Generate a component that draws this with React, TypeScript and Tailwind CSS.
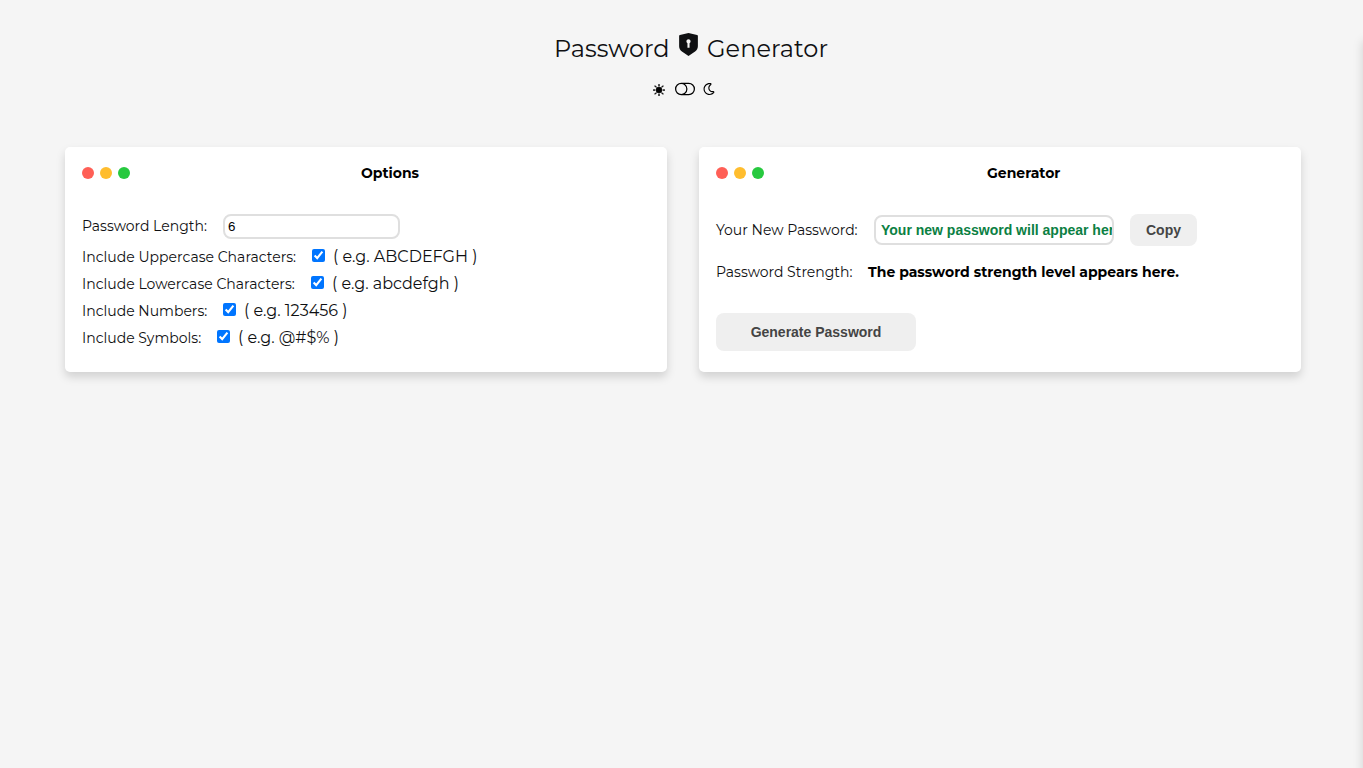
import { BsToggleOff, BsSunFill } from "react-icons/bs";
import { FaRegMoon } from "react-icons/fa";
import { RiShieldKeyholeFill } from "react-icons/ri";

function Dots() {
  return (
    <div className="flex gap-1.5">
      <span className="size-3 rounded-full bg-[#ff5f56]" />
      <span className="size-3 rounded-full bg-[#ffbd2e]" />
      <span className="size-3 rounded-full bg-[#27c93f]" />
    </div>
  );
}

function Option({ label, labelClass, hint }: { label: string; labelClass: string; hint: string }) {
  return (
    <div className="flex h-[27px] items-center">
      <label className={`${labelClass} shrink-0 whitespace-nowrap pt-[3px] text-[14px]`}>{label}</label>
      <input type="checkbox" defaultChecked className="ml-[15px] size-[13px]" />
      <span className="ml-2 whitespace-nowrap pt-0.5 text-[16px]">{hint}</span>
    </div>
  );
}

export default function App() {
  return (
    <div className="relative h-screen overflow-hidden bg-[#f5f5f5] font-['Montserrat','Inter',sans-serif] text-[#0f1012]">
      <header className="flex h-[147px] flex-col">
        <h1 className="ml-[554px] flex h-[66px] items-center pt-[30px] text-[24px]">
          <span className="w-[115px] whitespace-nowrap pt-0.5">Password</span>
          <RiShieldKeyholeFill size={25} className="mb-2 ml-[7px] shrink-0" />
          <span className="ml-1.5 whitespace-nowrap pt-0.5 tracking-[0.06px]">Generator</span>
        </h1>
        <div className="ml-[653px] mt-[13px] flex h-5 items-center text-black">
          <BsSunFill size={12} stroke="currentColor" strokeWidth={0.7} className="mt-px" />
          <BsToggleOff size={20} className="ml-2.5" />
          <FaRegMoon size={12} className="ml-2" />
        </div>
      </header>
      <main className="mx-[65px] flex w-[1236px] gap-8">
        <section className="h-[225px] w-[602px] rounded-[5px] bg-white px-[17px] shadow-[0_5px_10px_rgba(0,0,0,0.15)]">
          <div className="flex h-[52px] items-center">
            <Dots />
            <h2 className="ml-[231px] text-[14px] font-bold text-black">Options</h2>
          </div>
          <div className="mt-[15px] flex h-[25px] items-center">
            <label className="w-[126px] whitespace-nowrap text-[14px]">Password Length:</label>
            <input defaultValue="6" className="ml-[15px] h-[25px] w-[177px] rounded-lg border-2 border-[#dfdfdf] px-[3px] font-['Liberation_Sans',sans-serif] text-[13.333px] text-black" />
          </div>
          <div className="mt-[3px]">
            <Option label="Include Uppercase Characters:" labelClass="w-[215px] tracking-[0.02px]" hint="( e.g. ABCDEFGH )" />
            <Option label="Include Lowercase Characters:" labelClass="w-[214px] tracking-[0.02px]" hint="( e.g. abcdefgh )" />
            <Option label="Include Numbers:" labelClass="w-[126px]" hint="( e.g. 123456 )" />
            <Option label="Include Symbols:" labelClass="w-[120px]" hint="( e.g. @#$% )" />
          </div>
        </section>
        <section className="h-[225px] w-[602px] rounded-[5px] bg-white px-[17px] shadow-[0_5px_10px_rgba(0,0,0,0.15)]">
          <div className="flex h-[52px] items-center">
            <Dots />
            <h2 className="ml-[223px] text-[14px] font-bold text-black">Generator</h2>
          </div>
          <div className="mt-[15px] flex h-8 items-center">
            <label className="w-[143px] whitespace-nowrap text-[14px]">Your New Password:</label>
            <input readOnly placeholder="Your new password will appear here." className="ml-[15px] h-[30px] w-[240px] rounded-lg border-2 border-[#dfdfdf] pl-[5px] font-['Liberation_Sans',sans-serif] text-[14px] font-bold placeholder:text-[#0b8043]" />
            <button className="ml-4 h-8 w-[67px] rounded-lg bg-[#efefef] font-['Liberation_Sans',sans-serif] text-[14px] font-bold text-[#444]">Copy</button>
          </div>
          <div className="mt-[15px] flex h-[22px] items-center">
            <span className="w-[137px] whitespace-nowrap text-[14px]">Password Strength:</span>
            <strong className="ml-[15px] whitespace-nowrap text-[14px] font-bold text-black">The password strength level appears here.</strong>
          </div>
          <button className="mt-[30px] h-[38px] w-[200px] rounded-lg bg-[#efefef] font-['Liberation_Sans',sans-serif] text-[14px] font-bold text-[#444]">Generate Password</button>
        </section>
      </main>
      <aside className="absolute left-full top-[36px] h-[900px] w-[300px] bg-white shadow-[0_5px_10px_rgba(0,0,0,0.15)]" />
    </div>
  );
}
